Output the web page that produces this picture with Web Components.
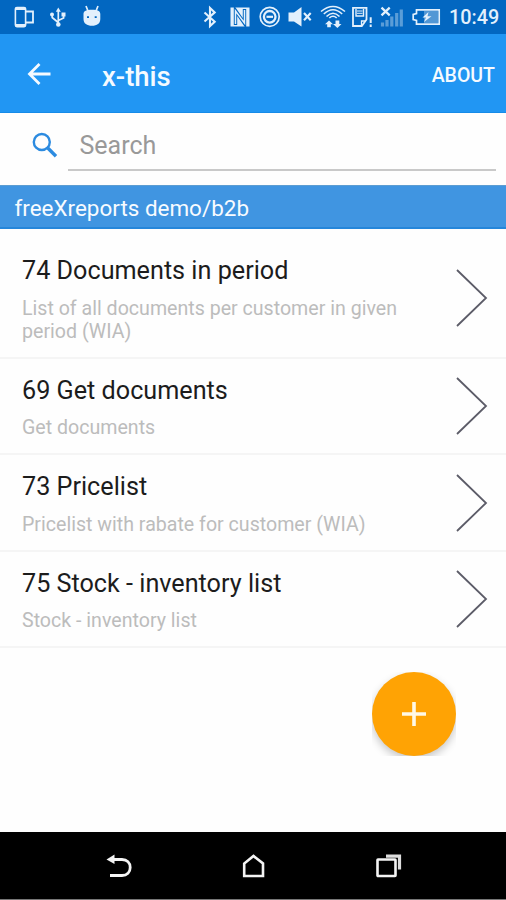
<!DOCTYPE html>
<html lang="en">
<head>
<meta charset="utf-8">
<title>x-this</title>
<style>
body {
    margin: 0;
    font-family: Roboto, "Liberation Sans", sans-serif;
    background: #fefefe;
}
</style>
</head>
<body>

<app-screen>
    <status-bar slot="top" time="10:49"></status-bar>
    <app-bar slot="top" action="ABOUT">x-this</app-bar>
    <search-field slot="top" placeholder="Search"></search-field>
    <section-header slot="top">freeXreports demo/b2b</section-header>

    <report-item title-text="74 Documents in period">List of all documents per customer in given period (WIA)</report-item>
    <report-item title-text="69 Get documents">Get documents</report-item>
    <report-item title-text="73 Pricelist">Pricelist with rabate for customer (WIA)</report-item>
    <report-item title-text="75 Stock - inventory list">Stock - inventory list</report-item>

    <add-button slot="fab"></add-button>
    <nav-bar slot="bottom"></nav-bar>
</app-screen>

<script>
class BaseElement extends HTMLElement {

    constructor() {
        super();
        this.attachShadow({ mode: "open" });
    }

    connectedCallback() {
        this.render();
    }
}

class AppScreen extends BaseElement {

    render() {
        this.shadowRoot.innerHTML = `
<style>
:host {
    position: relative;
    display: flex;
    flex-direction: column;
    width: 506px;
    height: 900px;
    overflow: hidden;
}

.list {
    flex: 1;
    padding-top: 10px;
}

/* the button floats over the list */
.fab {
    position: absolute;
    right: 50px;
    bottom: 144px;
}
</style>

<slot name="top"></slot>
<main class="list"><slot></slot></main>
<div class="fab"><slot name="fab"></slot></div>
<slot name="bottom"></slot>
        `;
    }
}

class StatusBar extends BaseElement {

    render() {
        const time = this.getAttribute("time");

        this.shadowRoot.innerHTML = `
<style>
:host {
    display: flex;
    align-items: center;
    box-sizing: border-box;
    height: 34px;
    padding: 0 7px 0 14px;
    color: #e3f0fc;
    background: #0267c1;
}

svg {
    flex: none;
    display: block;
    fill: none;
    stroke: currentColor;
}

.solid {
    fill: currentColor;
    stroke: none;
}

.space {
    flex: 1;
}

.time {
    width: 50px;
    padding-top: 2px;
    font-size: 19.8px;
    font-weight: 500;
    line-height: 34px;
    white-space: nowrap;
}
</style>

<svg width="89" height="34" viewBox="14 0 89 34">
    <rect x="15.400" y="7.600" width="10.200" height="19" rx="1.500" stroke-width="1.600"/>
    <path d="M15.400 9H25.600M15.400 25.200H25.600" stroke-width="2.200"/>
    <path d="M26 11.500H33V22.500H26" stroke-width="1.800"/>

    <path d="M58.300 10V25M52.200 15V17.500L58.200 22.500M63.600 14.500V18L58.300 20.500" stroke-width="1.700"/>
    <path class="solid" d="M58.300 7.500l2.500 4.200h-5z"/>
    <rect class="solid" x="61.500" y="12.500" width="4" height="4"/>
    <circle class="solid" cx="52" cy="14.500" r="2"/>
    <circle class="solid" cx="58.300" cy="24.500" r="2.300"/>

    <path d="M86 6L88 11M98 6L96 11" stroke-width="1.700"/>
    <path class="solid" fill-rule="evenodd" d="M83.500 14C83.500 11 86.500 9.800 92 9.800S100.300 11 100.300 14V19C100.300 23.500 97 25.800 92 25.800S83.500 23.500 83.500 19ZM87 16.300v1.600h2v-1.600zM94.700 16.300v1.600h2v-1.600z"/>
</svg>
<div class="space"></div>
<svg width="247" height="34" viewBox="202 0 247 34">
    <path d="M204.500 12.500L214.700 21.700L210 26V8L214.700 12.400L204.500 21.500" stroke-width="2.100"/>

    <path class="solid" d="M230.500 7.500h19v19h-19z"/>
    <path d="M235.500 25V10.500L244.500 23.500V9" stroke="#0267c1" stroke-width="3.400"/>
    <path d="M235.500 24V11L244.500 23V10" stroke-width="1.500"/>

    <circle cx="269.700" cy="16.800" r="9.500" stroke-width="1.700"/>
    <circle cx="269.700" cy="16.800" r="5.800" stroke-width="2.300"/>
    <path d="M266.500 16.800H273" stroke-width="2.200"/>

    <path class="solid" d="M288.500 12.500H294L301.500 7V26.500L294 21.500H288.500Z"/>
    <path d="M304 13L310.700 20.300M310.700 13L304 20.300" stroke-width="2.100"/>

    <g stroke-width="1.600">
        <path d="M321 11.500Q333 1.500 345 11.500"/>
        <path d="M323.800 14Q333 5.500 342.200 14"/>
        <path d="M326.500 16.500Q333 10 339.500 16.500"/>
        <path d="M329.300 18Q333 14.500 336.700 18"/>
    </g>
    <path class="solid" d="M325 24.300L329 20.600L333 24.300H330.800V27.300H327.200V24.300ZM333 24H335.500V20.600H339.300V24H341.500L337.400 27.900Z"/>

    <path d="M353 7.800H366.500V19.500L361.800 26H353Z" stroke-width="1.800"/>
    <path d="M356 9V16H363.500V9" stroke-width="1.400"/>
    <path d="M357 11H362.500M357 13.300H362.500" stroke-width="1"/>
    <path d="M361.500 25.500V21H366" stroke-width="1.300"/>
    <path d="M370.700 17.300V23M370.700 24.500V27" stroke-width="2"/>

    <path d="M382.500 22.500V26.500M387 20V26.500M391.800 16.500V26.500M396.700 13V26.500M401.300 9.500V26.500" stroke="#5a9dd8" stroke-width="3.200"/>
    <path d="M381.500 7.700L389.700 15.300M389.700 7.700L381.500 15.300" stroke-width="2.300"/>

    <rect x="424" y="11" width="14" height="12" fill="#5297d5" stroke="none"/>
    <path d="M416.500 9.900H439.200V24.100H416.500V20.500L413.200 19.500V14.500L416.500 13.500Z" stroke-width="1.700"/>
    <path class="solid" d="M428.500 12L422.500 17.500H426L424 22L431.500 16.300H427.500Z"/>
</svg>
<span class="time">${time}</span>
        `;
    }
}

class AppBar extends BaseElement {

    render() {
        this.shadowRoot.innerHTML = `
<style>
:host {
    display: flex;
    align-items: center;
    box-sizing: border-box;
    height: 79px;
    padding: 4px 11px 0 27px;
    color: #f5faff;
    background: #2196f3;
    border-bottom: 1px solid #168be8;
}

svg {
    margin-bottom: 2px;
}

h1 {
    flex: 1;
    margin: 2px 0 0 50px;
    font-size: 27.5px;
    font-weight: 500;
}

button {
    padding: 0;
    border: 0;
    background: none;
    color: inherit;
    font: 500 19.5px Roboto, sans-serif;
}
</style>

<svg width="25" height="24" viewBox="0 0 25 24" fill="none" stroke="currentColor" stroke-width="2.800">
    <path d="M12.500 2L2.500 12L12.500 22M2.500 12H23.500"/>
</svg>
<h1><slot></slot></h1>
<button>${this.getAttribute("action")}</button>
        `;
    }
}

class SearchField extends BaseElement {

    render() {
        this.shadowRoot.innerHTML = `
<style>
:host {
    display: flex;
    box-sizing: border-box;
    height: 72px;
    padding: 0 10px 14px 32px;
}

svg {
    margin: 19px 10px 0 0;
}

.field {
    flex: 1;
    box-sizing: border-box;
    height: 58px;
    padding: 5px 0 0 11.500px;
    font-size: 25px;
    line-height: 56px;
    color: #999;
    border-bottom: 2px solid #c9c9c9;
}
</style>

<svg width="26" height="26" viewBox="0 0 26 26" fill="none" stroke="#2c8be0">
    <circle cx="9.800" cy="10" r="8" stroke-width="2.400"/>
    <path d="M15.800 16L24 24.200" stroke-width="3.400"/>
</svg>
<div class="field">${this.getAttribute("placeholder")}</div>
        `;
    }
}

class SectionHeader extends BaseElement {

    render() {
        this.shadowRoot.innerHTML = `
<style>
:host {
    display: block;
    box-sizing: border-box;
    height: 44px;
    padding-left: 14.500px;
    font-size: 22.450px;
    line-height: 45px;
    color: #f7fbff;
    background: #4095e1;
    border-top: 1px solid #5c9dd2;
    border-bottom: 2px solid #2586da;
}
</style>

<slot></slot>
        `;
    }
}

class ReportItem extends BaseElement {

    render() {
        this.shadowRoot.innerHTML = `
<style>
:host {
    display: flex;
    align-items: center;
    box-sizing: border-box;
    padding: 15px 18px 14px 22px;
    border-bottom: 2px solid #f5f5f5;
}

.text {
    flex: 1;
}

h2 {
    margin: 0 0 8.500px;
    font-size: 25.200px;
    font-weight: 400;
    line-height: 34px;
    color: #1c1c1c;
}

p {
    width: 400px;
    margin: 0;
    font-size: 19.600px;
    line-height: 23px;
    color: #bcbcbc;
}
</style>

<div class="text">
    <h2>${this.getAttribute("title-text")}</h2>
    <p><slot></slot></p>
</div>
<svg width="32" height="58" viewBox="0 0 32 58" fill="none" stroke="#5c5c68" stroke-width="1.800">
    <path d="M1 1L30 29L1 57"/>
</svg>
        `;
    }
}

class AddButton extends BaseElement {

    render() {
        this.shadowRoot.innerHTML = `
<style>
:host {
    display: block;
    width: 84px;
    height: 84px;
    overflow: hidden;
}

button {
    display: block;
    width: 84px;
    height: 84px;
    padding: 0;
    border: 0;
    border-radius: 50%;
    background: #ffa304;
    box-shadow: 0 4px 8px rgba(0, 0, 0, .22);
}

svg {
    display: block;
    margin: auto;
}
</style>

<button aria-label="Add">
    <svg width="24" height="24" viewBox="0 0 24 24" fill="none" stroke="#fff8e6" stroke-width="3.600">
        <path d="M12 0V24M0 12H24"/>
    </svg>
</button>
        `;
    }
}

class NavBar extends BaseElement {

    render() {
        this.shadowRoot.innerHTML = `
<style>
:host {
    display: flex;
    justify-content: space-between;
    align-items: center;
    box-sizing: border-box;
    height: 68px;
    padding: 1px 104px 0 106px;
    background: #000;
    border-bottom: 1px solid #777;
}
</style>

<svg width="26" height="26" viewBox="0 0 26 26" fill="none" stroke="#f4f4f4" stroke-width="2.800">
    <path d="M7 6.500H16C21 6.500 24.200 9.800 24.200 14.500S21 22.500 16 22.500H4"/>
    <path d="M.5 6.500L8.500 1.500V11Z" fill="#f4f4f4" stroke="none"/>
</svg>
<svg width="24" height="26" viewBox="0 0 24 26" fill="none" stroke="#f4f4f4" stroke-width="2.600">
    <path d="M2.200 23V10.500L11.500 3L21 10.500V23Z"/>
</svg>
<svg width="26" height="26" viewBox="0 0 26 26" fill="none" stroke="#f4f4f4" stroke-width="2.600">
    <rect x="1.500" y="6.500" width="18" height="16.500" rx=".5"/>
    <path d="M10 3.200H23.500V16.500" stroke="#dedede" stroke-width="3.200"/>
</svg>
        `;
    }
}

customElements.define("app-screen", AppScreen);
customElements.define("status-bar", StatusBar);
customElements.define("app-bar", AppBar);
customElements.define("search-field", SearchField);
customElements.define("section-header", SectionHeader);
customElements.define("report-item", ReportItem);
customElements.define("add-button", AddButton);
customElements.define("nav-bar", NavBar);
</script>
</body>
</html>
